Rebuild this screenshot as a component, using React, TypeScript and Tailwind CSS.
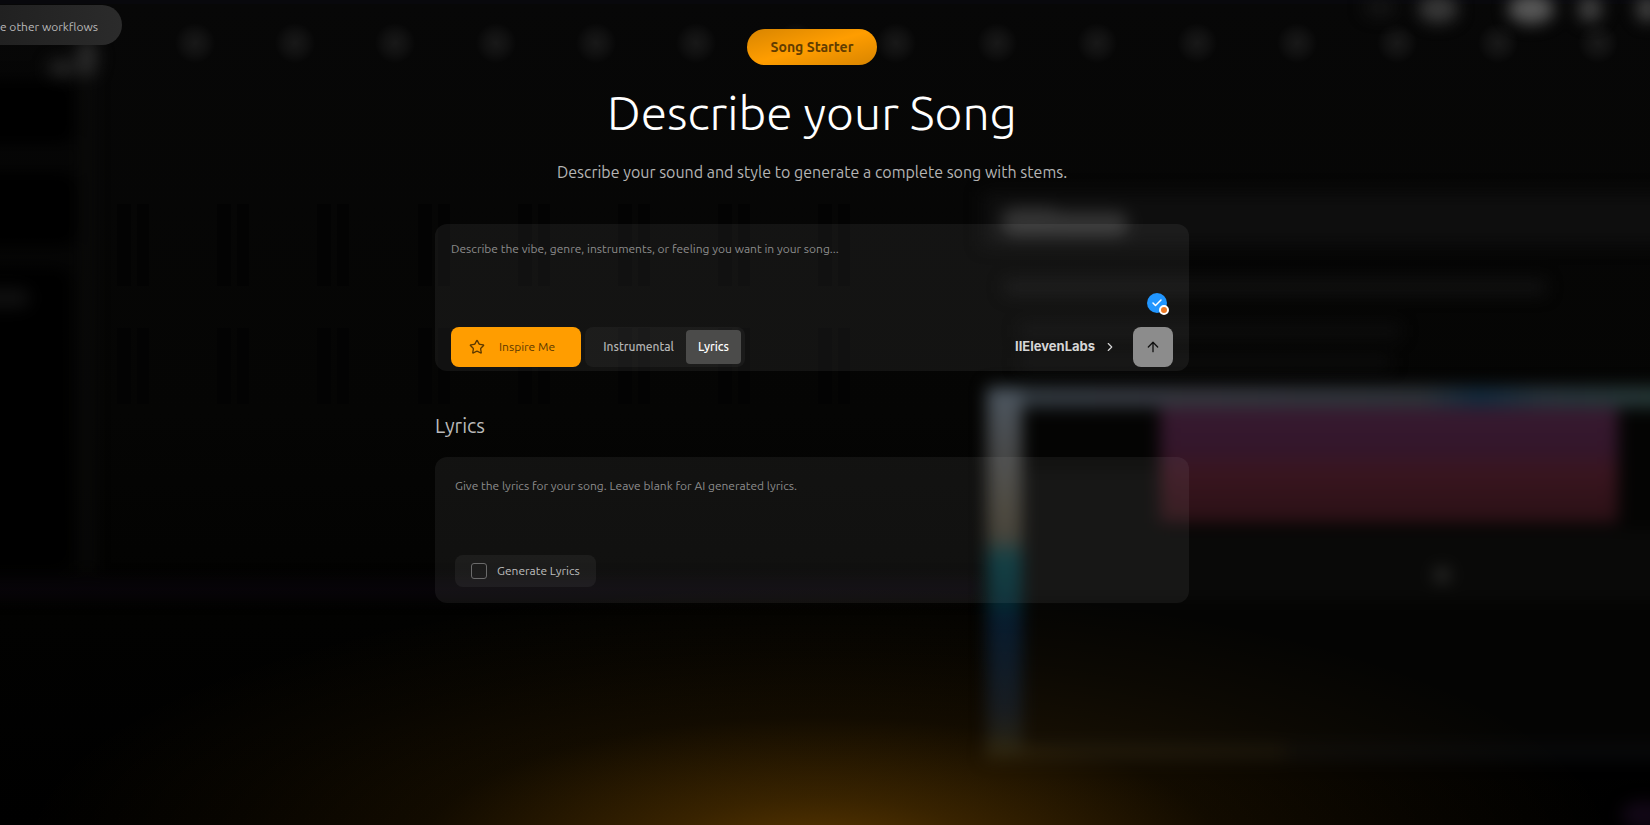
import { useState } from "react";
import { ArrowUp, Check, ChevronRight, Star } from "lucide-react";
import clsx from "clsx";

const MODES = ["Instrumental", "Lyrics"];

const beats = Array.from({ length: 15 }, (_, i) => Math.round(195 + i * 100.2));

// Dimmed, blurred studio window behind the dialog
function Backdrop() {
  return (
    <svg
      aria-hidden="true"
      className="absolute inset-0 h-full w-full"
      viewBox="0 0 1650 825"
      preserveAspectRatio="none"
    >
      <defs>
        <filter
          id="soft"
          filterUnits="userSpaceOnUse"
          x="-60"
          y="-60"
          width="1770"
          height="945"
          colorInterpolationFilters="sRGB"
        >
          <feGaussianBlur stdDeviation="8" />
        </filter>
        <radialGradient id="beat">
          <stop offset="0" stopColor="#181818" />
          <stop offset="0.5" stopColor="#111111" />
          <stop offset="1" stopColor="#070707" />
        </radialGradient>
        <linearGradient id="base" x2="0" y2="1">
          <stop offset="0" stopColor="#070707" />
          <stop offset="0.5" stopColor="#050504" />
          <stop offset="0.75" stopColor="#020201" />
          <stop offset="1" stopColor="#000000" />
        </linearGradient>
        <linearGradient id="rail" x2="0" y2="1">
          <stop offset="0" stopColor="#4c5660" />
          <stop offset="0.15" stopColor="#484a4c" />
          <stop offset="0.34" stopColor="#423e34" />
          <stop offset="0.4" stopColor="#3c392f" />
          <stop offset="0.46" stopColor="#06343a" />
          <stop offset="0.57" stopColor="#042a31" />
          <stop offset="0.63" stopColor="#051a2f" />
          <stop offset="0.88" stopColor="#0a1422" />
          <stop offset="1" stopColor="#181910" />
        </linearGradient>
        <linearGradient id="topRail" x2="1" y2="0">
          <stop offset="0" stopColor="#30393f" />
          <stop offset="0.3" stopColor="#33343c" />
          <stop offset="0.6" stopColor="#2d3238" />
          <stop offset="0.68" stopColor="#13293b" />
          <stop offset="0.77" stopColor="#27323a" />
          <stop offset="1" stopColor="#233832" />
        </linearGradient>
        <linearGradient id="clip" x2="0" y2="1">
          <stop offset="0" stopColor="#371a30" />
          <stop offset="0.4" stopColor="#33162b" />
          <stop offset="0.58" stopColor="#39151f" />
          <stop offset="1" stopColor="#2a1015" />
        </linearGradient>
        <radialGradient id="glow">
          <stop offset="0" stopColor="#ff9d00" stopOpacity="0.35" />
          <stop offset="0.2" stopColor="#ff9d00" stopOpacity="0.22" />
          <stop offset="0.5" stopColor="#ff9d00" stopOpacity="0.07" />
          <stop offset="0.75" stopColor="#ff9d00" stopOpacity="0.03" />
          <stop offset="1" stopColor="#ff9d00" stopOpacity="0" />
        </radialGradient>
      </defs>

      <rect width="1650" height="825" fill="url(#base)" />
      <rect width="1650" height="4" fill="#08080c" />

      {/* piano roll */}
      {beats.map((x) => (
        <g key={x}>
          <circle cx={x} cy="43" r="20" fill="url(#beat)" />
          {x < 980 && (
            <g fill="#030303">
              <rect x={x - 78} y="204" width="14" height="82" />
              <rect x={x - 58} y="204" width="12" height="82" />
              <rect x={x - 78} y="328" width="14" height="76" />
              <rect x={x - 58} y="328" width="12" height="76" />
            </g>
          )}
        </g>
      ))}

      {/* track list */}
      <g filter="url(#soft)">
        <rect x="-60" y="80" width="134" height="64" rx="12" fill="#000" />
        <rect x="-60" y="172" width="136" height="74" rx="12" fill="#000" />
        <rect x="-60" y="268" width="130" height="300" rx="12" fill="#000" />
        <rect x="82" y="80" width="10" height="490" fill="#0b0b0a" />
        <ellipse cx="62" cy="68" rx="14" ry="9" fill="#242424" />
        <ellipse cx="87" cy="58" rx="10" ry="20" fill="#2a2a2a" />
        <rect x="-20" y="288" width="50" height="20" rx="10" fill="#0f0f0f" />
        <rect x="-60" y="582" width="1040" height="14" fill="#09050c" />
      </g>

      {/* header buttons */}
      <g filter="url(#soft)">
        <ellipse cx="1380" cy="8" rx="16" ry="8" fill="#161616" />
        <ellipse cx="1438" cy="9" rx="20" ry="14" fill="#383838" />
        <ellipse cx="1531" cy="9" rx="23" ry="15" fill="#585858" />
        <ellipse cx="1590" cy="9" rx="12" ry="13" fill="#424242" />
        <ellipse cx="1648" cy="9" rx="12" ry="13" fill="#424242" />
      </g>

      {/* sounds panel */}
      <g filter="url(#soft)">
        <rect x="982" y="192" width="728" height="54" fill="#0e0e0e" />
        <rect x="1002" y="208" width="60" height="28" rx="12" fill="#343434" />
        <rect x="1046" y="212" width="82" height="24" rx="11" fill="#343434" />
        <rect x="1005" y="280" width="540" height="14" fill="#121212" />
        <rect x="1020" y="324" width="380" height="14" fill="#0d0d0d" />
        <rect x="1020" y="356" width="370" height="12" fill="#0d0d0d" />
      </g>
      <g filter="url(#soft)">
        <rect x="1022" y="410" width="688" height="340" fill="#040403" />
        <rect x="1022" y="470" width="138" height="130" fill="#090908" />
        <rect x="1160" y="530" width="550" height="70" fill="#090908" />
        <rect x="985" y="744" width="300" height="16" fill="#100f0a" />
        <rect x="1285" y="744" width="425" height="16" fill="#08090a" />
        <rect x="1160" y="400" width="458" height="123" fill="url(#clip)" />
        <rect x="987" y="386" width="723" height="22" fill="url(#topRail)" />
        <rect x="987" y="390" width="35" height="366" fill="url(#rail)" />
        <ellipse cx="1442" cy="575" rx="8" ry="8" fill="#2c2c2a" />
        <ellipse cx="1645" cy="815" rx="24" ry="14" fill="#120716" />
      </g>

      <ellipse cx="820" cy="850" rx="800" ry="265" fill="url(#glow)" />
    </svg>
  );
}

function SongForm() {
  const [mode, setMode] = useState("Lyrics");
  const [prompt, setPrompt] = useState("");

  return (
    <section className="flex h-[147px] flex-col rounded-xl bg-white/6 px-4 pb-1">
      <div className="relative flex-1">
        <textarea
          aria-label="Song prompt"
          value={prompt}
          onChange={(e) => setPrompt(e.target.value)}
          placeholder="Describe the vibe, genre, instruments, or feeling you want in your song..."
          className="block h-full w-full resize-none bg-transparent pt-[17px] text-[12px] leading-4 text-white outline-none placeholder:text-[#8c8c8c]"
        />
        <span className="absolute right-[6px] bottom-[14px] flex size-5 items-center justify-center rounded-full bg-[#2196ff] text-white">
          <Check size={12} strokeWidth={3} />
          <span className="absolute -right-[2px] -bottom-[2px] size-[10px] rounded-full border-2 border-white bg-[#ee7a24]" />
        </span>
      </div>

      <div className="flex items-center justify-between">
        <div className="flex gap-1">
          <button
            type="button"
            className="flex h-10 w-[130px] items-center gap-[14px] rounded-lg bg-[#ff9d00] pl-[18px] text-[12px] text-[#5c3900]"
          >
            <Star size={16} />
            Inspire Me
          </button>
          <div className="flex h-10 w-40 items-center justify-end rounded-lg bg-white/4 pr-1">
            {MODES.map((item) => (
              <button
                key={item}
                type="button"
                aria-pressed={mode === item}
                onClick={() => setMode(item)}
                className={clsx(
                  "h-[34px] rounded px-3 text-[12px] font-medium",
                  mode === item ? "bg-[#4b4b4a] text-white" : "text-[#b4b4b4]"
                )}
              >
                {item}
              </button>
            ))}
          </div>
        </div>

        <div className="flex items-center gap-4">
          <button
            type="button"
            className="flex items-center gap-2 font-['Inter',sans-serif] text-[13px] font-bold text-[#d6d6d6]"
          >
            IIElevenLabs
            <ChevronRight size={14} />
          </button>
          <button
            type="button"
            aria-label="Generate song"
            className="flex size-10 items-center justify-center rounded-lg bg-[#8c8c8c] text-[#111]"
          >
            <ArrowUp size={16} />
          </button>
        </div>
      </div>
    </section>
  );
}

function LyricsForm() {
  const [lyrics, setLyrics] = useState("");
  const [generate, setGenerate] = useState(false);

  return (
    <section className="flex h-[146px] flex-col items-start rounded-xl bg-white/6 px-5 pb-4">
      <textarea
        aria-labelledby="lyrics-title"
        value={lyrics}
        onChange={(e) => setLyrics(e.target.value)}
        placeholder="Give the lyrics for your song. Leave blank for AI generated lyrics."
        className="w-full flex-1 resize-none bg-transparent pt-[21px] text-[12px] leading-4 text-white outline-none placeholder:text-[#8c8c8c]"
      />
      <label className="flex h-8 items-center gap-[10px] rounded-lg bg-white/5 px-4 text-[12px] text-[#bdbdbd]">
        <input
          type="checkbox"
          checked={generate}
          onChange={(e) => setGenerate(e.target.checked)}
          className="size-4 appearance-none rounded-[3px] border border-[#6a6a6a] checked:bg-[#ff9d00]"
        />
        Generate Lyrics
      </label>
    </section>
  );
}

export default function App() {
  return (
    <div className="relative min-h-screen overflow-hidden bg-black font-['Ubuntu','Noto_Sans',sans-serif]">
      <Backdrop />

      <button
        type="button"
        className="absolute top-[5px] left-0 flex h-10 items-center rounded-r-full bg-linear-to-r from-[#212121] to-[#2b2b2b] pt-[3px] pr-6 text-[12px] text-[#b9b9b9]"
      >
        e other workflows
      </button>

      <main className="relative flex flex-col items-center pt-[29px] pr-[26px]">
        <span className="flex h-9 items-center rounded-full bg-linear-to-br from-[#d88500] via-[#ff9d00] to-[#d88500] px-6 text-[14px] font-bold text-[#613c00]">
          Song Starter
        </span>
        <h1 className="mt-[15px] text-[48px] leading-[64px] font-light text-white">
          Describe your Song
        </h1>
        <p className="mt-4 text-[16px] leading-6 text-[#b4b4b4]">
          Describe your sound and style to generate a complete song with stems.
        </p>

        <div className="mt-10 w-full max-w-[754px]">
          <SongForm />
          <h2 id="lyrics-title" className="mt-[41px] mb-[17px] text-[20px] leading-7 text-[#bababa]">
            Lyrics
          </h2>
          <LyricsForm />
        </div>
      </main>
    </div>
  );
}
